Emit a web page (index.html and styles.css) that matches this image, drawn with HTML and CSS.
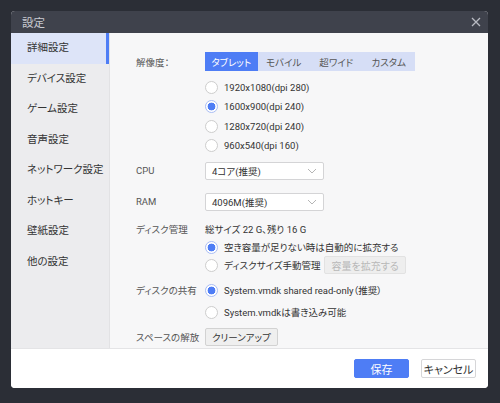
FILE: index.html
```html
<!DOCTYPE html>
<html lang="ja">
<head>
<meta charset="utf-8">
<link rel="stylesheet" href="styles.css">
</head>
<body>
<div class="dialog">
  <div class="header">
    <span class="title">設定</span>
    <svg class="close" width="10" height="10" viewBox="0 0 10 10"><path d="M1 1L9 9M9 1L1 9" stroke="#b8bac2" stroke-width="1.3" fill="none"/></svg>
  </div>
  <div class="main">
    <ul class="sidebar">
      <li class="nav active">詳細設定</li>
      <li class="nav">デバイス設定</li>
      <li class="nav">ゲーム設定</li>
      <li class="nav">音声設定</li>
      <li class="nav">ネットワーク設定</li>
      <li class="nav">ホットキー</li>
      <li class="nav">壁紙設定</li>
      <li class="nav">他の設定</li>
    </ul>
    <div class="content">
      <div class="row r-res">
        <div class="label">解像度：</div>
        <div class="tabs">
          <span class="tab on">タブレット</span>
          <span class="tab">モバイル</span>
          <span class="tab">超ワイド</span>
          <span class="tab">カスタム</span>
        </div>
      </div>
      <div class="radios r-list">
        <div class="opt"><span class="radio"></span>1920x1080(dpi 280)</div>
        <div class="opt"><span class="radio checked"></span>1600x900(dpi 240)</div>
        <div class="opt"><span class="radio"></span>1280x720(dpi 240)</div>
        <div class="opt"><span class="radio"></span>960x540(dpi 160)</div>
      </div>
      <div class="row r-cpu">
        <div class="label">CPU</div>
        <div class="select">4コア(推奨)<svg class="chev" width="10" height="6" viewBox="0 0 10 6"><path d="M1 1L5 5L9 1" stroke="#b5b5b5" stroke-width="1" fill="none"/></svg></div>
      </div>
      <div class="row r-ram">
        <div class="label">RAM</div>
        <div class="select">4096M(推奨)<svg class="chev" width="10" height="6" viewBox="0 0 10 6"><path d="M1 1L5 5L9 1" stroke="#b5b5b5" stroke-width="1" fill="none"/></svg></div>
      </div>
      <div class="row r-disk">
        <div class="label">ディスク管理</div>
        <div class="text">総サイズ 22 G、残り 16 G</div>
      </div>
      <div class="radios r-disk-opts">
        <div class="opt"><span class="radio checked"></span>空き容量が足りない時は自動的に拡充する</div>
        <div class="opt"><span class="radio"></span>ディスクサイズ手動管理<span class="btn disabled">容量を拡充する</span></div>
      </div>
      <div class="row r-share">
        <div class="label">ディスクの共有</div>
        <div class="opt"><span class="radio checked"></span>System.vmdk shared read-only（推奨）</div>
      </div>
      <div class="radios r-share2">
        <div class="opt"><span class="radio"></span>System.vmdkは書き込み可能</div>
      </div>
      <div class="row r-space">
        <div class="label">スペースの解放</div>
        <span class="btn">クリーンアップ</span>
      </div>
    </div>
  </div>
  <div class="footer">
    <span class="fbtn primary">保存</span>
    <span class="fbtn">キャンセル</span>
  </div>
</div>
</body>
</html>
```
FILE: styles.css
```css
* { box-sizing: border-box; }
html, body { margin: 0; padding: 0; }
body {
  width: 500px;
  height: 403px;
  background: #2b2e36;
  font-family: Roboto, "Noto Sans CJK JP", sans-serif;
  font-feature-settings: "palt";
  white-space: nowrap;
  color: #333;
  overflow: hidden;
}
.dialog {
  margin: 11px 0 0 11px;
  width: 477px;
  height: 377px;
  border-radius: 4px;
  overflow: hidden;
  display: flex;
  flex-direction: column;
  background: #fff;
}
.header {
  height: 22px;
  flex: none;
  background: #3f424c;
  display: flex;
  align-items: center;
  justify-content: space-between;
  padding: 0 7px 0 11px;
}
.title { color: #c9cbd2; font-size: 11.5px; }
.close { display: block; }
.main {
  flex: 1;
  display: flex;
  min-height: 0;
}
.sidebar {
  list-style: none;
  margin: 0;
  padding: 0;
  width: 99px;
  flex: none;
  background: #ececee;
  border-right: 1px solid #e2e2e4;
}
.nav {
  height: 30.5px;
  line-height: 30px;
  padding-left: 16px;
  font-size: 10.5px;
  color: #333;
}
.nav.active {
  background: #dde4f8;
  box-shadow: inset -3px 0 0 #4e7df5;
}
.content {
  flex: 1;
  background: #f7f7f8;
  padding: 19px 0 0 26px;
  display: flex;
  flex-direction: column;
  font-size: 9.5px;
}
.row { display: flex; align-items: center; }
.label { width: 69px; flex: none; color: #555; font-size: 9.5px; }
.tabs {
  display: flex;
  width: 210px;
  height: 19px;
  background: #d6def6;
}
.tab {
  flex: 1;
  display: flex;
  align-items: center;
  justify-content: center;
  color: #555;
  font-size: 9.5px;
}
.tab.on { background: #4e7df5; color: #fff; }
.radios { padding-left: 69px; display: flex; flex-direction: column; }
.opt {
  display: flex;
  align-items: center;
  height: 19.5px;
  color: #333;
  font-size: 9.5px;
}
.radio {
  width: 13px;
  height: 13px;
  border-radius: 50%;
  border: 1px solid #cdcdcd;
  background: #fff;
  margin-right: 6px;
  flex: none;
}
.radio.checked {
  border: 1px solid #a9bdf5;
  background: radial-gradient(circle, #4e7df5 0 3.6px, #fff 4.2px);
}
.r-list { margin-top: 6.5px; }
.r-cpu { margin-top: 6px; }
.r-ram { margin-top: 13px; }
.r-disk { margin-top: 9.5px; height: 18px; }
.r-disk-opts .opt { height: 18px; }
.r-share { margin-top: 7px; height: 18px; }
.r-share .opt { height: 18px; }
.r-share2 { margin-top: 4px; }
.r-share2 .opt { height: 18px; }
.r-space { margin-top: 7px; }
.select {
  width: 119px;
  height: 18px;
  background: #fff;
  border: 1px solid #d4d4d6;
  border-radius: 2px;
  display: flex;
  align-items: center;
  justify-content: space-between;
  padding: 0 6px 0 6px;
  color: #333;
  font-size: 9.5px;
}
.chev { display: block; }
.text { color: #333; font-size: 9.5px; }
.btn {
  display: inline-flex;
  align-items: center;
  height: 18px;
  padding: 0 6px;
  border: 1px solid #d2d2d2;
  background: #efefef;
  border-radius: 2px;
  color: #333;
  font-size: 9.5px;
}
.btn.disabled {
  margin-left: 4px;
  padding: 0 6px;
  font-size: 10px;
  color: #b8b8b8;
  background: #eeeeee;
  border-color: #e2e2e2;
}
.footer {
  height: 40px;
  flex: none;
  border-top: 1px solid #e4e4e6;
  background: #fff;
  display: flex;
  align-items: center;
  justify-content: flex-end;
  padding-right: 12px;
  gap: 12px;
}
.fbtn {
  width: 55px;
  height: 19px;
  display: flex;
  align-items: center;
  justify-content: center;
  border: 1px solid #d6d6d8;
  border-radius: 2px;
  background: #fff;
  color: #333;
  font-size: 11px;
}
.fbtn.primary { background: #4e7df5; border-color: #4e7df5; color: #fff; }
```
